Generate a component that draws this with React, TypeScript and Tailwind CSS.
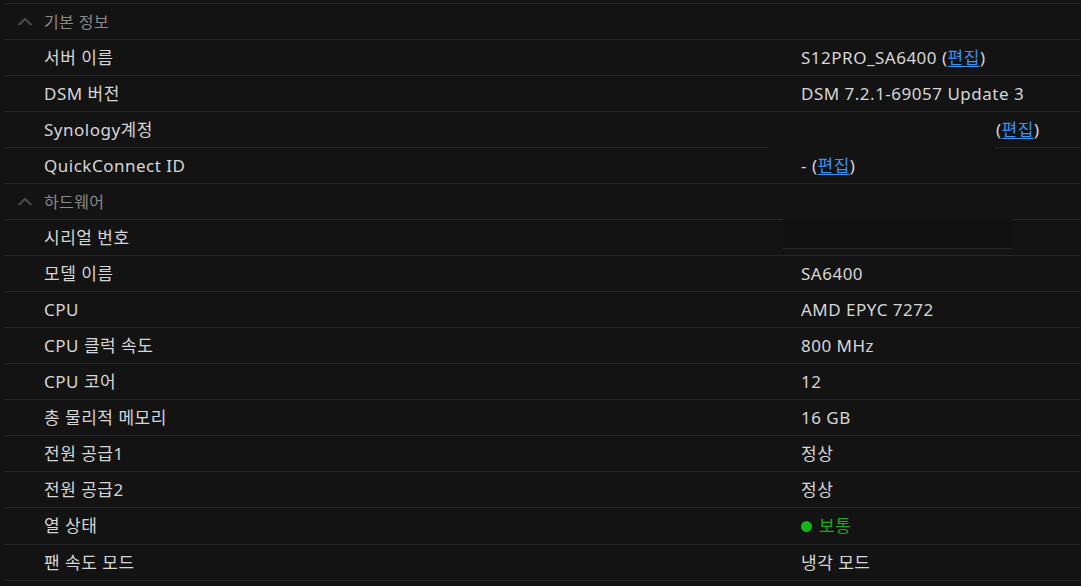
import { ReactNode } from 'react'

type Row = { label: string; value?: ReactNode; tall?: boolean }

const Edit = () => (
  <>
    (<span className="text-[#3d8ff0] underline underline-offset-2">편집</span>)
  </>
)

const basicRows: Row[] = [
  { label: '서버 이름', value: <>S12PRO_SA6400 <Edit /></> },
  { label: 'DSM 버전', value: 'DSM 7.2.1-69057 Update 3' },
  {
    label: 'Synology계정',
    value: (
      <span className="flex items-center">
        <span className="-ml-[33px] h-9 w-[227px] bg-[#131313]" />
        <span className="ml-[1px]">
          <Edit />
        </span>
      </span>
    ),
  },
  { label: 'QuickConnect ID', value: <>- <Edit /></> },
]

const hardwareRows: Row[] = [
  {
    label: '시리얼 번호',
    value: (
      <span className="-ml-[18px] -mt-[1px] block h-[30px] w-[229px] self-start border-b border-[#262626] bg-[#121212]" />
    ),
  },
  { label: '모델 이름', value: 'SA6400' },
  { label: 'CPU', value: 'AMD EPYC 7272' },
  { label: 'CPU 클럭 속도', value: '800 MHz' },
  { label: 'CPU 코어', value: '12' },
  { label: '총 물리적 메모리', value: '16 GB' },
  { label: '전원 공급1', value: '정상' },
  { label: '전원 공급2', value: '정상' },
  {
    label: '열 상태',
    tall: true,
    value: (
      <span className="flex items-center gap-[7px] text-[#1fa51f]">
        <span className="h-[11px] w-[11px] rounded-full bg-[#13b413]" />
        보통
      </span>
    ),
  },
  { label: '팬 속도 모드', value: '냉각 모드' },
]

const Chevron = () => (
  <svg width="16" height="14" viewBox="0 0 16 14" className="text-[#4a4a4a]">
    <path d="M1.5 10 8 4l6.5 6" fill="none" stroke="currentColor" strokeWidth="2.2" />
  </svg>
)

const Section = ({ title, rows }: { title: string; rows: Row[] }) => (
  <>
    <div className="flex h-9 items-center border-b border-[#262626] text-[16px] tracking-[0.4px] text-[#8a8a8a]">
      <span className="flex w-[40px] justify-center pl-[2px]">
        <Chevron />
      </span>
      <span>{title}</span>
    </div>
    {rows.map((r) => (
      <div
        key={r.label}
        className={`flex items-center border-b border-[#262626] text-[17px] tracking-[0.5px] text-[#d6d6d6] ${r.tall ? 'h-[37px]' : 'h-9'}`}
      >
        <span className="w-[797px] pl-[40px]">{r.label}</span>
        <span className="flex h-full items-center">{r.value}</span>
      </div>
    ))}
  </>
)

const App = () => {
  return (
    <div
      className="h-[586px] w-[1081px] overflow-hidden bg-[#131313] pt-[3px] pl-[4px]"
      style={{ fontFamily: '"Noto Sans", "Noto Sans CJK KR", sans-serif' }}
    >
      <div className="border-t border-[#262626]">
        <Section title="기본 정보" rows={basicRows} />
        <Section title="하드웨어" rows={hardwareRows} />
      </div>
    </div>
  )
}

export default App
